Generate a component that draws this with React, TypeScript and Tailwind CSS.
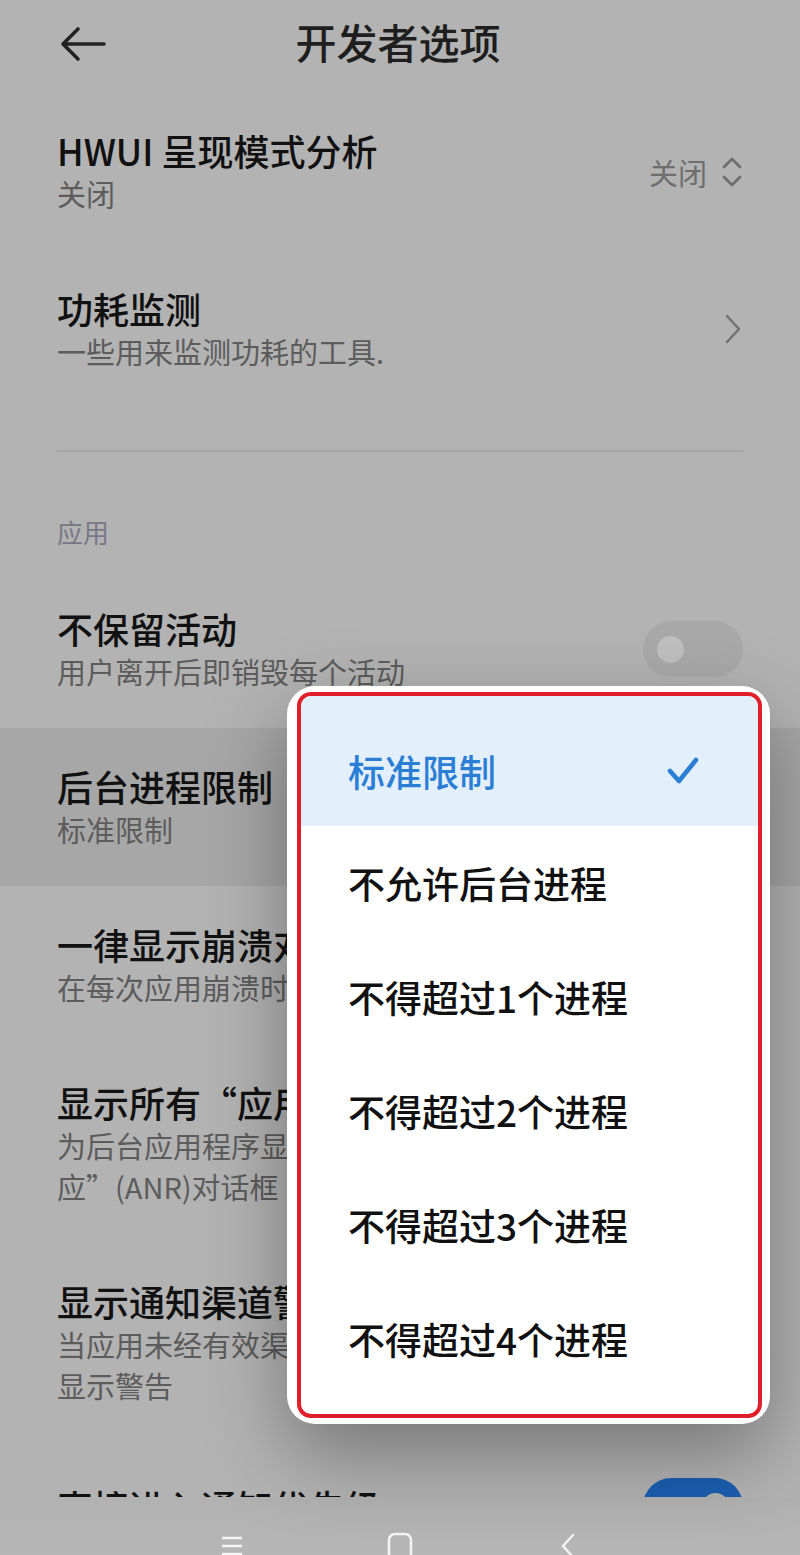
import React from 'react';

const font = "font-['Noto_Sans_CJK_SC','Noto_Sans',sans-serif]";

interface SettingRowProps {
  title: string;
  subtitle?: React.ReactNode;
  right?: React.ReactNode;
  highlighted?: boolean;
}

function SettingRow({ title, subtitle, right, highlighted }: SettingRowProps) {
  return (
    <div
      className={`flex items-center justify-between px-[57px] py-[36px] ${highlighted ? 'bg-[#a7a7a7]' : ''}`}
    >
      <div className="flex flex-col">
        <p className="text-[36px] leading-[44px] font-medium text-[#111111] whitespace-nowrap">{title}</p>
        {subtitle && (
          <p className="mt-[1px] text-[29px] leading-[41px] text-[#5c5c5c] whitespace-nowrap">{subtitle}</p>
        )}
      </div>
      {right}
    </div>
  );
}

function Toggle({ on }: { on?: boolean }) {
  return (
    <div
      className={`flex items-center w-[100px] h-[56px] rounded-full px-[14px] ${on ? 'bg-[#1b5eb0] justify-end' : 'bg-[#a9a9a9] justify-start'}`}
    >
      <div className={`w-[27px] h-[27px] rounded-full ${on ? 'bg-[#b3b3b3]' : 'bg-[#bfbfbf]'}`} />
    </div>
  );
}

const options = ['标准限制', '不允许后台进程', '不得超过1个进程', '不得超过2个进程', '不得超过3个进程', '不得超过4个进程'];

export default function App() {
  return (
    <div className={`relative w-[800px] h-[1555px] overflow-hidden bg-[#b3b3b3] ${font}`}>
      <div className="h-[1497px] overflow-hidden">
        {/* Header */}
        <div className="relative flex items-center justify-center h-[92px] pb-[4px]">
          <svg className="absolute left-[58px] top-[24px]" width="50" height="40" viewBox="0 0 50 40" fill="none">
            <path d="M46 20H5M20 5L5 20L20 35" stroke="#222" strokeWidth="3.6" strokeLinecap="round" strokeLinejoin="round" />
          </svg>
          <h1 className="text-[41px] leading-[48px] font-medium text-[#1e1e1e] -mt-[6px] -ml-[4px]">开发者选项</h1>
        </div>

        <SettingRow
          title="HWUI 呈现模式分析"
          subtitle="关闭"
          right={
            <div className="flex items-center gap-[14px] pt-[2px]">
              <span className="text-[29px] leading-[40px] text-[#6e6e6e]">关闭</span>
              <svg width="22" height="34" viewBox="0 0 22 34" fill="none">
                <path d="M3 12L11 4L19 12M3 22L11 30L19 22" stroke="#6e6e6e" strokeWidth="2.6" strokeLinecap="round" strokeLinejoin="round" />
              </svg>
            </div>
          }
        />
        <SettingRow
          title="功耗监测"
          subtitle="一些用来监测功耗的工具."
          right={
            <svg className="mr-[2px]" width="16" height="30" viewBox="0 0 16 30" fill="none">
              <path d="M2 2L14 15L2 28" stroke="#727272" strokeWidth="2.4" strokeLinecap="round" strokeLinejoin="round" />
            </svg>
          }
        />

        <div className="mx-[57px] mt-[42px] h-[2px] bg-[#a6a6a6]" />

        <p className="px-[57px] mt-[64px] text-[26px] leading-[32px] text-[#777789]">应用</p>

        <div className="mt-[22px]">
          <SettingRow title="不保留活动" subtitle="用户离开后即销毁每个活动" right={<Toggle />} />
          <SettingRow title="后台进程限制" subtitle="标准限制" highlighted />
          <SettingRow title="一律显示崩溃对话框" subtitle="在每次应用崩溃时显示对话框" />
          <SettingRow
            title="显示所有“应用无响应”"
            subtitle={
              <>
                为后台应用程序显示“应用程序无响
                <br />
                应”(ANR)对话框
              </>
            }
          />
          <SettingRow
            title="显示通知渠道警告"
            subtitle={
              <>
                当应用未经有效渠道发布通知时，在屏幕上
                <br />
                显示警告
              </>
            }
          />
          <SettingRow title="直接进入通知优先级" right={<Toggle on />} />
        </div>
      </div>

      {/* Navigation bar */}
      <div className="flex items-start justify-center gap-[108px] h-[58px] pt-[38px] bg-gradient-to-b from-[#b1b1b1] to-[#b6b6b6]">
        <div className="flex justify-center w-[60px]">
          <svg width="24" height="22" viewBox="0 0 24 22" fill="none">
            <path d="M2 3H22M2 11H22M2 19H22" stroke="#f4f4f4" strokeWidth="2.4" />
          </svg>
        </div>
        <div className="flex justify-center w-[60px]">
          <svg width="26" height="24" viewBox="0 0 26 24" fill="none" className="-mt-[3px]">
            <rect x="2" y="2" width="22" height="30" rx="6" stroke="#f4f4f4" strokeWidth="2.6" />
          </svg>
        </div>
        <div className="flex justify-center w-[60px]">
          <svg width="20" height="24" viewBox="0 0 20 24" fill="none" className="-mt-[2px]">
            <path d="M15 2L5 13L15 24" stroke="#f4f4f4" strokeWidth="2.4" strokeLinecap="round" />
          </svg>
        </div>
      </div>

      {/* Popup menu */}
      <div className="absolute left-[287px] top-[686px] w-[483px] h-[738px] rounded-[28px] bg-white pt-[6px] pl-[10px] pr-[8px] pb-[6px] shadow-[0_30px_80px_rgba(0,0,0,0.34)]">
        <div className="h-full rounded-[14px] border-[4px] border-[#e01f2b] overflow-hidden">
          {options.map((opt, i) => (
            <div
              key={opt}
              className={`flex items-center justify-between pl-[47px] pr-[58px] ${i === 0 ? 'h-[130px] pt-[20px] bg-[#e3effb]' : 'h-[114px]'}`}
            >
              <span
                className={`text-[37px] leading-[44px] font-medium whitespace-nowrap ${i === 0 ? 'text-[#2a7fd5]' : 'text-[#111111]'}`}
              >
                {opt}
              </span>
              {i === 0 && (
                <svg width="34" height="30" viewBox="0 0 34 30" fill="none">
                  <path d="M4 15L13 25L30 4" stroke="#2a7fd5" strokeWidth="4.6" strokeLinecap="round" strokeLinejoin="round" />
                </svg>
              )}
            </div>
          ))}
        </div>
      </div>
    </div>
  );
}
